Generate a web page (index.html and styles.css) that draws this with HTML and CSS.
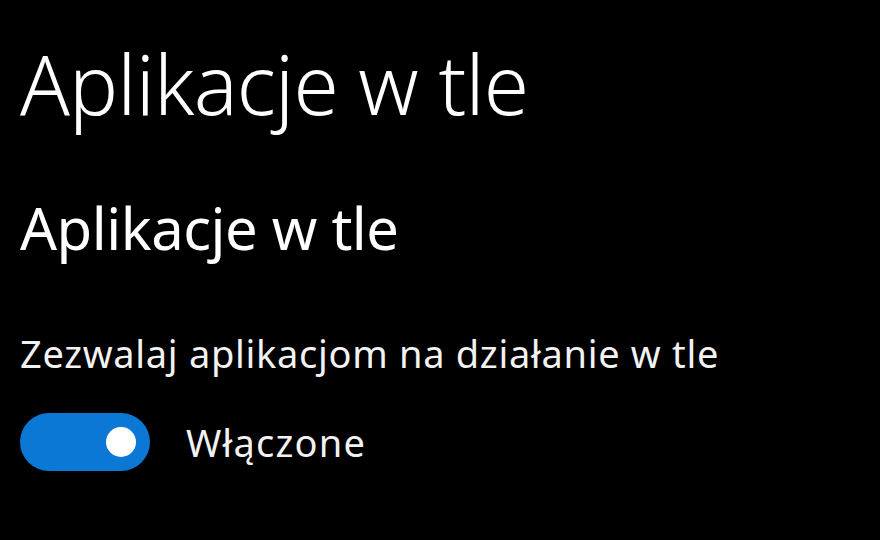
FILE: index.html
```html
<!DOCTYPE html>
<html lang="pl">
<head>
  <meta charset="UTF-8" />
  <title>Aplikacje w tle</title>
  <link rel="stylesheet" href="styles.css">
</head>
<body>
  <main class="page">
    <h1 class="page-title">Aplikacje w tle</h1>

    <section class="group">
      <h2 class="group-title">Aplikacje w tle</h2>
      <p class="setting-label">Zezwalaj aplikacjom na działanie w tle</p>
      <div class="toggle-row">
        <span class="toggle on"><span class="knob"></span></span>
        <span class="toggle-text">Włączone</span>
      </div>
    </section>
  </main>
</body>
</html>
```

FILE: styles.css
```css
/* Reset & base */
* { box-sizing: border-box; margin: 0; padding: 0; }
html, body { height: 100%; }
body {
  background: #000;
  color: #fff;
  font-family: "Noto Sans", "Open Sans", sans-serif;
  overflow: hidden;
}

.page {
  padding: 28px 0 0 20px;
}

.page-title {
  font-weight: 300;
  font-size: 82px;
  line-height: 110px;
  letter-spacing: -0.8px;
}

.group { margin-top: 55px; }

.group-title {
  font-weight: 400;
  font-size: 58px;
  line-height: 70px;
  letter-spacing: -0.5px;
}

.setting-label {
  margin-top: 67px;
  font-size: 38px;
  line-height: 46px;
  letter-spacing: 0.7px;
  color: #f2f2f2;
}

/* Toggle */
.toggle-row {
  display: flex;
  align-items: center;
  gap: 36px;
  margin-top: 37px;
}
.toggle {
  width: 130px;
  height: 58px;
  border-radius: 29px;
  background: #0a78d4;
  display: flex;
  align-items: center;
  justify-content: flex-end;
  padding-right: 14px;
}
.knob {
  width: 30px;
  height: 30px;
  border-radius: 50%;
  background: #fff;
}
.toggle-text {
  font-size: 38px;
  line-height: 46px;
  letter-spacing: 1.2px;
  color: #f2f2f2;
}
```
